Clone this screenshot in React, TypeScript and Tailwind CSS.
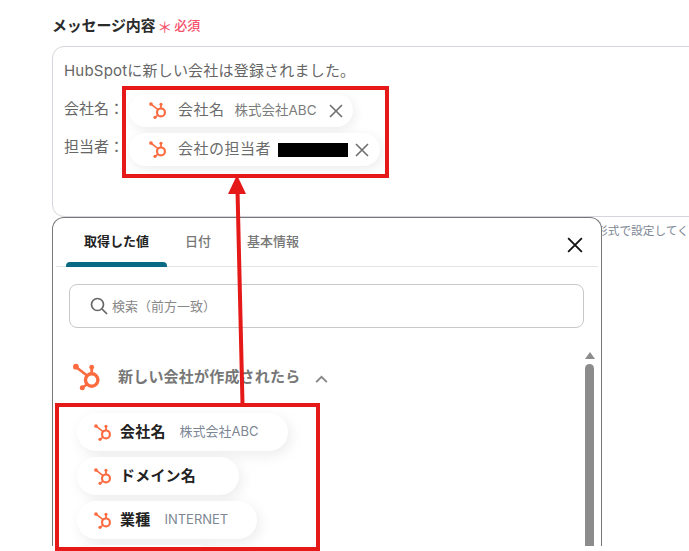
const FONT = "font-['Inter','Noto_Sans_CJK_JP',sans-serif]";

function HubspotIcon({ className }: { className: string }) {
  return (
    <svg viewBox="0 0 28 30" className={className} fill="none" stroke="#fb6b3f">
      <circle cx="18.7" cy="18" r="6.2" strokeWidth="3.4" />
      <path d="M3 5 L14 13.5" strokeWidth="2.6" />
      <path d="M18.7 5 V11" strokeWidth="2.8" />
      <path d="M9.3 25.7 L14.5 22" strokeWidth="2.4" />
      <circle cx="2.9" cy="4.7" r="2.9" fill="#fb6b3f" stroke="none" />
      <circle cx="18.7" cy="5.2" r="2.4" fill="#fb6b3f" stroke="none" />
      <circle cx="9.3" cy="25.8" r="2.5" fill="#fb6b3f" stroke="none" />
    </svg>
  );
}

function CloseIcon({ className, color }: { className: string; color: string }) {
  return (
    <svg viewBox="0 0 14 14" className={className} fill="none" stroke={color} strokeWidth="1.6">
      <path d="M1 1 L13 13 M13 1 L1 13" />
    </svg>
  );
}

function InputChip({ label, children, width }: { label: string; children: React.ReactNode; width: string }) {
  return (
    <div className={`flex h-[33px] items-center rounded-full bg-white pl-5 shadow-[2px_3px_12px_rgba(0,0,0,0.08)] ${width}`}>
      <HubspotIcon className="h-[19px] w-[18px] shrink-0" />
      <span className="ml-[11px] text-[15px] tracking-[0.5px] text-[#6b6b6b]">{label}</span>
      {children}
    </div>
  );
}

function ValueChip({ label, value, width }: { label: string; value?: string; width: string }) {
  return (
    <div className={`flex h-[38px] shrink-0 items-center rounded-full bg-white pl-[17px] shadow-[3px_4px_14px_rgba(0,0,0,0.08)] ${width}`}>
      <HubspotIcon className="h-[19px] w-[18px] shrink-0" />
      <span className="ml-2 text-[15px] font-bold tracking-[0.2px] text-[#222]">{label}</span>
      {value && <span className="ml-[14px] text-[13px] text-[#7d8794]">{value}</span>}
    </div>
  );
}

export default function App() {
  return (
    <div className={`relative h-[551px] w-[689px] overflow-hidden bg-white pl-[52px] pt-[15px] ${FONT}`}>
      <div className="flex h-[22px] items-center">
        <span className="text-[15px] font-bold tracking-[-0.2px] text-[#2b2b2b]">メッセージ内容</span>
        <span className="ml-[2px] mt-[3px] text-[15px] leading-none text-[#f4516c]">＊</span>
        <span className="ml-[2px] text-[13px] font-medium text-[#f4516c]">必須</span>
      </div>

      <div className="mt-[9px] h-[171px] w-[700px] rounded-xl border border-[#d3d6dc] pl-[11px] pt-[13px] text-[15px] text-[#666]">
        <p className="h-[22px] leading-[22px] tracking-[0.2px]">HubSpotに新しい会社は登録されました。</p>
        <div className="mt-[12px] flex h-[33px] items-center">
          <span className="w-[65px] pb-[3px]">会社名：</span>
          <InputChip label="会社名" width="w-[224px]">
            <span className="ml-[10px] text-[13.5px] text-[#7c7c7c]">株式会社ABC</span>
            <CloseIcon className="ml-3 h-[14px] w-[14px]" color="#6e6e6e" />
          </InputChip>
        </div>
        <div className="mt-[6px] flex h-[33px] items-center">
          <span className="w-[65px] pb-[5px]">担当者：</span>
          <InputChip label="会社の担当者" width="w-[251px]">
            <span className="ml-[7px] h-[14px] w-[70px] bg-black" />
            <CloseIcon className="ml-[7px] h-[14px] w-[14px]" color="#6e6e6e" />
          </InputChip>
        </div>
      </div>
      <p className="mt-[5px] pl-[544px] text-[11.7px] leading-[18px] whitespace-nowrap text-[#7d8794]">形式で設定してく</p>

      {/* popup sits over the input */}
      <div className="absolute left-[52px] top-[217px] flex h-[329px] w-[550px] flex-col overflow-hidden rounded-t-xl border-x border-t border-[#777] bg-white">
        <div className="relative mx-[3px] flex h-[49px] shrink-0 items-center border-b border-[#e4e4e4] pl-[28px] text-[13px] text-[#777]">
          <span className="font-bold text-[#222]">取得した値</span>
          <span className="ml-[36px] font-medium">日付</span>
          <span className="ml-[36px] font-medium">基本情報</span>
          <span className="absolute bottom-[-1px] left-[10px] h-[5px] w-[101px] rounded-t-[4px] bg-[#0b6a83]" />
          <CloseIcon className="absolute left-[511px] top-[19px] h-4 w-4" color="#111" />
        </div>

        <div className="mx-4 mt-[17px] flex h-[44px] w-[515px] shrink-0 items-center rounded-lg border border-[#c8c8c8] pl-5 text-[13px] text-[#888]">
          <svg viewBox="0 0 18 18" className="h-[18px] w-[18px]" fill="none" stroke="#666" strokeWidth="1.7">
            <circle cx="7.5" cy="7.5" r="6" />
            <path d="M12 12 L17 17" />
          </svg>
          <span className="ml-[4px] pt-[2px]">検索（前方一致）</span>
        </div>

        <div className="flex min-h-0 flex-1">
          <div className="min-w-0 flex-1">
            <div className="ml-5 mt-[34px] flex h-[30px] items-center">
              <HubspotIcon className="h-[30px] w-[28px]" />
              <span className="ml-[17px] text-[15px] font-bold tracking-[0.2px] text-[#777]">新しい会社が作成されたら</span>
              <svg viewBox="0 0 14 9" className="ml-[15px] mt-[3px] h-[8px] w-[13px]" fill="none" stroke="#888" strokeWidth="2.2">
                <path d="M1 8 L7 2 L13 8" />
              </svg>
            </div>
            <div className="ml-6 mt-[21px] flex flex-col gap-[6px]">
              <ValueChip label="会社名" value="株式会社ABC" width="w-[211px]" />
              <ValueChip label="ドメイン名" width="w-[162px]" />
              <ValueChip label="業種" value="INTERNET" width="w-[180px]" />
              <ValueChip label="" width="w-[140px]" />
            </div>
          </div>
          <div className="mr-[7px] mt-[24px] flex w-[9px] shrink-0 flex-col items-center">
            <span className="h-0 w-0 border-x-[5px] border-b-[7px] border-x-transparent border-b-[#8c8c8c]" />
            <span className="mt-[5px] w-full flex-1 rounded-t-full bg-[#8c8c8c]" />
          </div>
        </div>
      </div>

      {/* red annotation */}
      <div className="absolute left-[122px] top-[86px] h-[92px] w-[267px] border-4 border-[#e61919]" />
      <div className="absolute left-[55px] top-[403px] h-[148px] w-[265px] border-4 border-[#e61919]" />
      <svg className="absolute left-0 top-0 h-[551px] w-[689px]" viewBox="0 0 689 551" fill="none">
        <path d="M242.5 404 L237.5 190" stroke="#e61919" strokeWidth="4" />
        <path d="M237 175 L228 194 H246 Z" fill="#e61919" />
      </svg>
    </div>
  );
}
